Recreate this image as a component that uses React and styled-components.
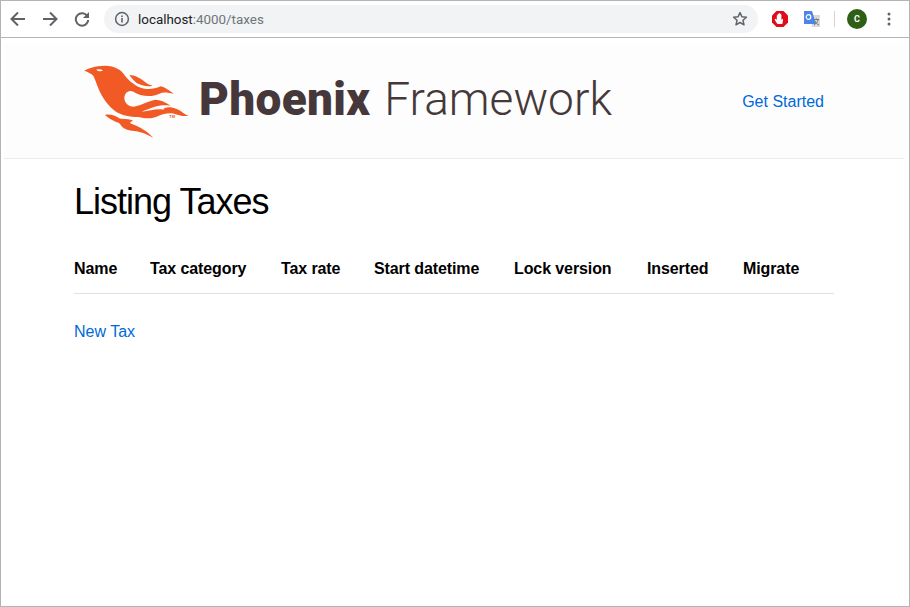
import React from 'react';
import styled, { createGlobalStyle } from 'styled-components';

const Global = createGlobalStyle`
  html, body { margin: 0; padding: 0; background: #fff; }
  body { font-family: "Liberation Sans", Arial, sans-serif; }
`;
const Frame = styled.div`
  width: 910px; height: 607px; box-sizing: border-box; overflow: hidden;
  border: 1px solid #b4b4b4; display: flex; flex-direction: column; background: #fff;
`;
const Chrome = styled.div`
  height: 37px; flex: none; box-sizing: border-box; display: flex; align-items: center;
  border-bottom: 1px solid #b4b4b4; background: #fff; padding: 0 0 0 1px;
`;
const NavBtn = styled.div`
  width: 32px; height: 32px; display: flex; align-items: center; justify-content: center; flex: none;
`;
const Omni = styled.div`
  width: 654px; height: 28px; margin-left: 6px; margin-right: 6px; border-radius: 14px; background: #f1f3f4;
  display: flex; align-items: center; padding: 0 10px 0 10px; box-sizing: border-box; flex: none;
`;
const Url = styled.div`
  flex: 1; margin-left: 8px; font: 13.4px "Roboto", "Liberation Sans", sans-serif; color: #202124;
`;
const UrlDim = styled.span` color: #6f7478; `;
const Ext = styled.div`
  width: 32px; display: flex; justify-content: center; align-items: center; flex: none;
`;
const Sep = styled.div` width: 1px; height: 16px; background: #d5d5d5; margin: 0 6px 0 6px; flex: none; `;
const Avatar = styled.div`
  width: 20px; height: 20px; border-radius: 50%; background: #2d6016; color: #fff; flex: none;
  font: 700 9px "Roboto", sans-serif; display: flex; align-items: center; justify-content: center;
`;
const Page = styled.div` flex: 1; display: flex; flex-direction: column; `;
const Header = styled.header`
  height: 114px; margin: 7px 5px 0 3px; flex: none; box-sizing: border-box;
  background: #fdfdfd; border-bottom: 1px solid #ececec;
  display: flex; align-items: center; padding: 0 80px 0 66px;
`;
const Logo = styled.div` display: flex; align-items: center; flex: none; height: 90px; margin-bottom: 4px; `;
const Word = styled.div`
  margin: 0 0 2px -1px; font-family: "Roboto", sans-serif; font-size: 46px;
  color: #46383a; line-height: 1; white-space: nowrap;
`;
const Bold = styled.span` font-weight: 900; letter-spacing: 0.3px; `;
const Light = styled.span` font-weight: 300; margin-left: 14px; `;
const Nav = styled.a`
  margin-left: auto; font-size: 16px; color: #0069d9; text-decoration: none;
`;
const Main = styled.main` padding: 21px 76px 0 73px; `;
const Title = styled.h2`
  margin: 0; font-size: 36px; font-weight: 400; line-height: 44px; color: #000; letter-spacing: -1px;
`;
const Table = styled.table`
  border-collapse: collapse; width: 760px; margin-top: 19px;
`;
const Th = styled.th`
  box-sizing: border-box; width: ${(p) => p.$w}; text-align: left; font-size: 16px; letter-spacing: -0.1px;
  font-weight: 700; color: #000; height: 50px; padding: 2px 0 0 0;
  border-bottom: 1px solid #e1e1e1; white-space: nowrap;
`;
const NewLink = styled.a`
  display: block; margin-top: 28px; font-size: 16px; line-height: 20px; color: #0069d9; text-decoration: none;
`;

const stroke = { fill: 'none', stroke: '#5f6368', strokeWidth: 2 };

const Phoenix = () => (
  <svg width="130" height="90" viewBox="0 0 390 270">
    <g fill="#f15a24">
      <path d="M42 47 C55 40 75 33 105 32 C135 32 155 45 165 62 C172 72 190 88 205 95 C225 105 250 104 272 94 C285 96 298 108 312 116 C295 114 280 110 268 116 C245 128 210 124 190 110 C175 104 163 115 163 130 C164 148 180 158 198 154 C215 150 235 138 255 134 C272 134 288 142 302 152 C285 150 268 150 252 156 C238 162 225 165 215 170 C240 168 258 160 280 164 C285 150 320 158 332 168 C340 174 346 180 356 182 C342 186 325 180 312 176 C295 172 275 178 258 186 C240 192 225 190 205 186 C180 186 155 180 138 170 C115 155 95 125 85 100 C78 82 74 70 70 62 C62 54 52 50 42 47 Z" />
      <path d="M178 60 C195 60 212 70 226 82 C233 88 240 90 248 92 C232 96 214 92 200 84 C190 76 184 68 178 60 Z" />
      <path d="M105 180 C120 176 135 182 148 190 C160 194 175 190 190 198 C180 200 176 204 188 208 C205 214 222 224 232 232 C238 238 244 242 250 248 C238 244 225 234 212 232 C195 226 178 230 162 220 C150 212 152 204 140 202 C128 196 116 190 105 180 Z" />
    </g>
    <path fill="#fdfdfd" d="M79 44 C85 42 93 43 99 46 C94 50 85 50 79 44 Z" />
    <text x="298" y="188" fontSize="12" fontWeight="700" fill="#f15a24" fontFamily="Liberation Sans">TM</text>
  </svg>
);

export default function App() {
  return (
    <Frame>
      <Global />
      <Chrome>
        <NavBtn>
          <svg width="16" height="16" viewBox="0 0 16 16"><path {...stroke} d="M15 8H2M8 1.500L1.500 8 8 14.500" /></svg>
        </NavBtn>
        <NavBtn>
          <svg width="16" height="16" viewBox="0 0 16 16"><path {...stroke} d="M1 8h13M8 1.500L14.500 8 8 14.500" /></svg>
        </NavBtn>
        <NavBtn>
          <svg width="16" height="16" viewBox="0 0 16 16"><path {...stroke} d="M13.500 5.500A6.200 6.200 0 1 0 14.200 9" /><path fill="#5f6368" d="M15 1v6H9z" /></svg>
        </NavBtn>
        <Omni>
          <svg width="16" height="16" viewBox="0 0 16 16"><circle cx="8" cy="8" r="6.400" fill="none" stroke="#5f6368" strokeWidth="1.500" /><path fill="#5f6368" d="M7.200 7h1.600v4.500H7.200zM7.200 4.400h1.600V6H7.200z" /></svg>
          <Url>localhost<UrlDim>:4000/taxes</UrlDim></Url>
          <svg width="16" height="16" viewBox="0 0 16 16"><path fill="none" stroke="#5f6368" strokeWidth="1.500" strokeLinejoin="round" d="M8 1.600l1.900 4.200 4.500.5-3.400 3 1 4.500L8 11.500l-4 2.300 1-4.500-3.400-3 4.500-.5z" /></svg>
        </Omni>
        <Ext>
          <svg width="18" height="18" viewBox="0 0 18 18"><path fill="#e20c18" d="M5.500 1h7L17 5.500v7L12.500 17h-7L1 12.500v-7z" /><path fill="#fff" d="M6 13.500c-1-1.500-2.300-3.500-2.300-4.200 0-.7.900-.8 1.500 0l.6.700V5.500c0-.8 1-.8 1 0V4c0-.8 1.200-.8 1.200 0v-.3c0-.8 1.300-.8 1.300 0V4.700c0-.8 1.100-.8 1.100 0V10c.5-1 1.500-1.200 1.700-.7L11.500 13.500c-.4.700-5 .7-5.500 0z" /></svg>
        </Ext>
        <Ext>
          <svg width="18" height="18" viewBox="0 0 18 18"><path fill="#d9d9d9" d="M7 5h10v12H9z" /><path fill="#4a86e8" d="M1 1h8l4 13H1z" /><circle cx="5.500" cy="7" r="2.300" fill="none" stroke="#fff" strokeWidth="1.200" /><path fill="none" stroke="#777" strokeWidth="1" d="M11 9.500h5M13.500 8.500v1M15 10c-.5 2-2 4-4 5M12 11c.5 1.500 2 3 4 4" /></svg>
        </Ext>
        <Sep />
        <Ext><Avatar>C</Avatar></Ext>
        <Ext>
          <svg width="4" height="14" viewBox="0 0 4 14"><circle cx="2" cy="2" r="1.500" fill="#5f6368" /><circle cx="2" cy="7" r="1.500" fill="#5f6368" /><circle cx="2" cy="12" r="1.500" fill="#5f6368" /></svg>
        </Ext>
      </Chrome>
      <Page>
        <Header>
          <Logo>
            <Phoenix />
            <Word><Bold>Phoenix</Bold><Light>Framework</Light></Word>
          </Logo>
          <Nav>Get Started</Nav>
        </Header>
        <Main>
          <Title>Listing Taxes</Title>
          <Table>
            <thead>
              <tr>
                <Th $w="76px">Name</Th><Th $w="131px">Tax category</Th><Th $w="93px">Tax rate</Th><Th $w="140px">Start datetime</Th><Th $w="133px">Lock version</Th><Th $w="96px">Inserted</Th><Th $w="91px">Migrate</Th>
              </tr>
            </thead>
          </Table>
          <NewLink>New Tax</NewLink>
        </Main>
      </Page>
    </Frame>
  );
}
